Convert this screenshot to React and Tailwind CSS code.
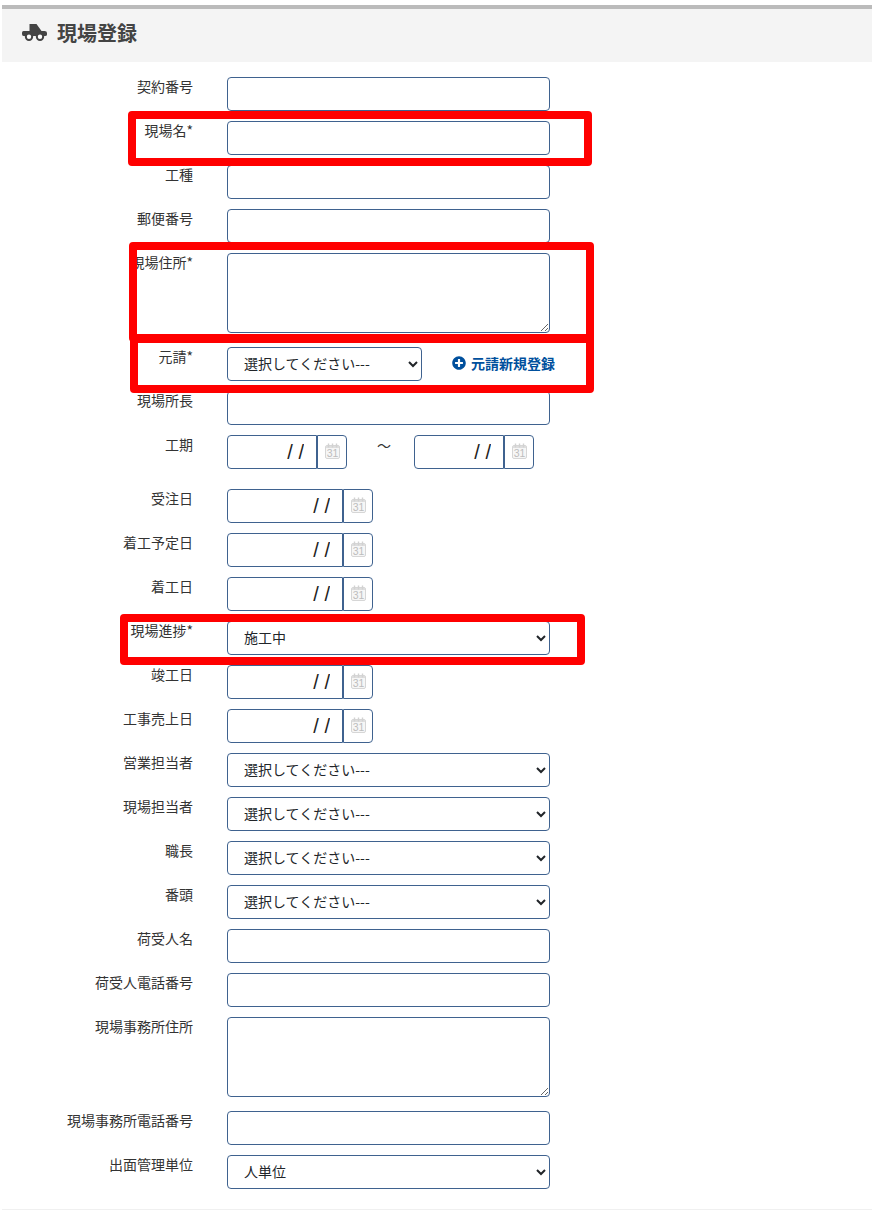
import React from "react";
import { FaPlusCircle } from "react-icons/fa";

const ctl = "block h-[34px] border border-[#3f628f] rounded-[4px] bg-white text-[14px] text-[#212529]";

function Label({ children }) {
  return <label className="block w-[191px] shrink-0 -mt-px text-right text-[14px] leading-[20px] text-[#333]">{children}</label>;
}

function Row({ label, children, className = "" }) {
  return (
    <div className={`flex mb-[10px] ${className}`}>
      <Label>{label}</Label>
      <div className="ml-[34px] flex items-start">{children}</div>
    </div>
  );
}

const TextInput = () => <input type="text" className={`${ctl} w-[323px] px-4 outline-none`} />;
const TextArea = () => <textarea className={`${ctl} w-[323px] !h-[80px] mb-[4px] px-4 py-1 outline-none`} />;

function Sel({ w = "w-[323px]", value }) {
  return (
    <select defaultValue={value} className={`${ctl} ${w} pl-3 pr-1 pb-[2px] outline-none`} style={{ appearance: "auto" }}>
      <option>{value}</option>
    </select>
  );
}

function Cal() {
  return (
    <svg width="15" height="16" viewBox="0 0 15 16" className="block mb-[3px]">
      <rect x="0.5" y="2.5" width="14" height="13" rx="1.5" fill="#f6f6f6" stroke="#d6d6d6" />
      <rect x="1" y="3" width="13" height="2" fill="#dedede" />
      <rect x="2.8" y="0.5" width="1.4" height="4" fill="#d2d2d2" />
      <rect x="6.8" y="0.5" width="1.4" height="4" fill="#d2d2d2" />
      <rect x="10.8" y="0.5" width="1.4" height="4" fill="#d2d2d2" />
      <text x="7.5" y="14" textAnchor="middle" fontSize="10.5" fontWeight="400" fill="#bdbdbd" fontFamily="'Liberation Sans', sans-serif">31</text>
    </svg>
  );
}

function Truck() {
  return (
    <svg width="25" height="17" viewBox="0 0 25 17" className="block">
      <path d="M7.5 0 H14.5 L19.5 7 H7.5 Z" fill="#444" />
      <path d="M1.5 7 H22.5 Q25 7 25 9 V10.5 Q25 12 23 12 H1.5 Q0 12 0 10 V8.5 Q0 7 1.5 7 Z" fill="#444" />
      <circle cx="7" cy="12.7" r="3.2" fill="#fff" stroke="#444" strokeWidth="2" />
      <circle cx="18" cy="12.7" r="3.2" fill="#fff" stroke="#444" strokeWidth="2" />
    </svg>
  );
}

function DateInput({ w = "w-[116px]" }) {
  return (
    <div className="flex">
      <input
        type="text"
        readOnly
        value="/ /"
        className={`${ctl} ${w} rounded-r-none text-right pr-[12px] outline-none !text-[#222] !text-[20px]`}
        style={{ fontFamily: "'Liberation Sans', sans-serif" }}
      />
      <div className="w-[30px] h-[34px] flex items-center justify-center border border-[#3f628f] rounded-r-[4px] bg-white">
        <Cal />
      </div>
    </div>
  );
}

function Box({ className }) {
  return <div className={`absolute border-[8px] border-[#ff0000] rounded-[4px] pointer-events-none ${className}`} />;
}

export default function App() {
  const placeholder = "選択してください---";
  return (
    <div
      className="relative w-[878px] pt-[5px] pl-[2px] pr-[6px] bg-white"
      style={{ fontFamily: "'Noto Sans CJK JP', 'Liberation Sans', sans-serif" }}
    >
      <div className="border-t-4 border-[#bbbbbb] border-b border-b-[#f0f0f0] h-[1205px]">
        <div className="h-[53px] bg-[#f4f4f4] flex items-center pl-[20px] pb-[6px]">
          <Truck />
          <h1 className="ml-[10px] text-[20px] leading-[24px] font-bold text-[#444]">現場登録</h1>
        </div>
        <form className="pt-[15px]">
          <Row label="契約番号"><TextInput /></Row>
          <Row label="現場名*"><TextInput /></Row>
          <Row label="工種"><TextInput /></Row>
          <Row label="郵便番号"><TextInput /></Row>
          <Row label="現場住所*"><TextArea /></Row>
          <Row label="元請*">
            <Sel w="w-[195px]" value={placeholder} />
            <a className="ml-[30px] h-[34px] pb-[2px] flex items-center text-[14px] font-bold text-[#00509d]">
              <FaPlusCircle className="w-[14px] h-[14px] mr-[5px]" />
              元請新規登録
            </a>
          </Row>
          <Row label="現場所長"><TextInput /></Row>
          <Row label="工期" className="!mb-[20px]">
            <DateInput w="w-[90px]" />
            <span className="w-[67px] pl-[7px] text-center text-[14px] leading-[20px] text-[#333]">〜</span>
            <DateInput w="w-[90px]" />
          </Row>
          <Row label="受注日"><DateInput /></Row>
          <Row label="着工予定日"><DateInput /></Row>
          <Row label="着工日"><DateInput /></Row>
          <Row label="現場進捗*"><Sel value="施工中" /></Row>
          <Row label="竣工日"><DateInput /></Row>
          <Row label="工事売上日"><DateInput /></Row>
          <Row label="営業担当者"><Sel value={placeholder} /></Row>
          <Row label="現場担当者"><Sel value={placeholder} /></Row>
          <Row label="職長"><Sel value={placeholder} /></Row>
          <Row label="番頭"><Sel value={placeholder} /></Row>
          <Row label="荷受人名"><TextInput /></Row>
          <Row label="荷受人電話番号"><TextInput /></Row>
          <Row label="現場事務所住所"><TextArea /></Row>
          <Row label="現場事務所電話番号"><TextInput /></Row>
          <Row label="出面管理単位"><Sel value="人単位" /></Row>
        </form>
      </div>
      <Box className="left-[128px] top-[111px] w-[464px] h-[55px]" />
      <Box className="left-[129px] top-[242px] w-[465px] h-[100px]" />
      <Box className="left-[130px] top-[335px] w-[464px] h-[58px]" />
      <Box className="left-[120px] top-[614px] w-[465px] h-[51px]" />
    </div>
  );
}
